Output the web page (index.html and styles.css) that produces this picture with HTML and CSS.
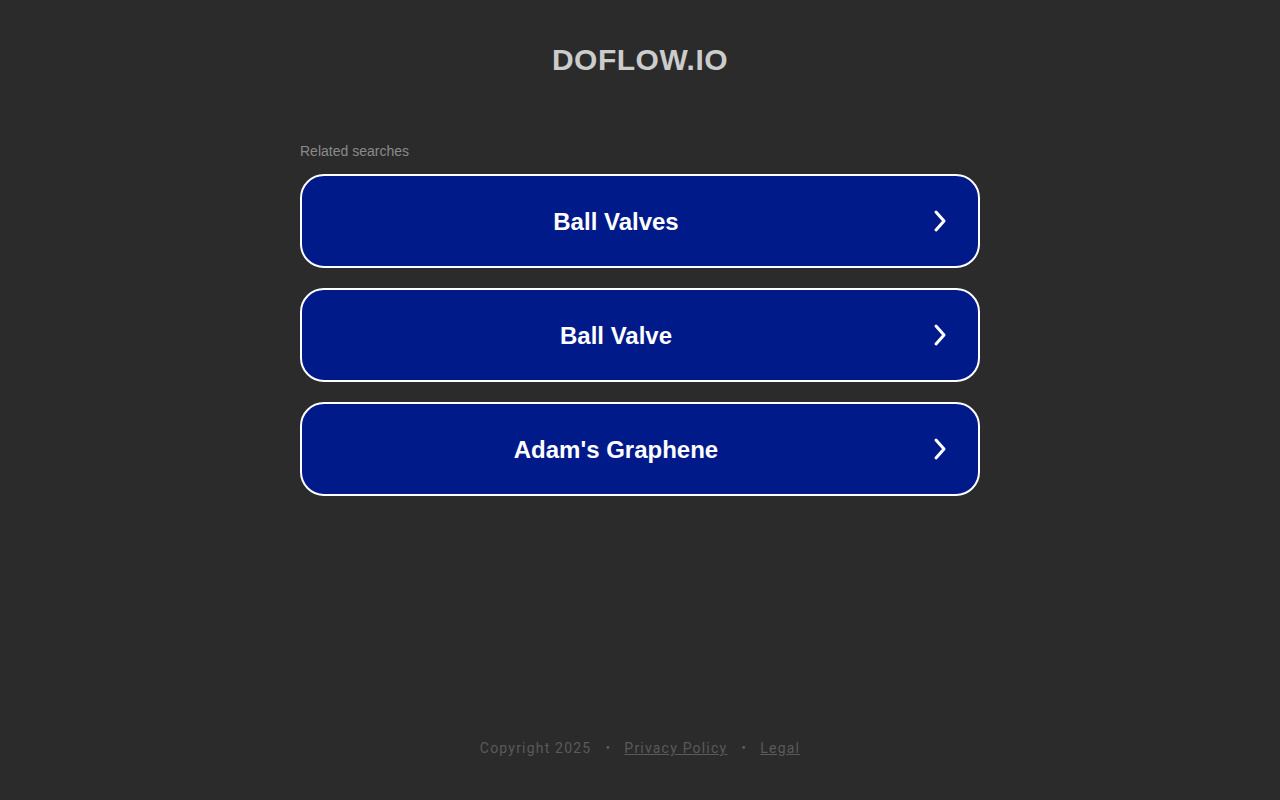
FILE: index.html
```html
<!DOCTYPE html>
<html>
<head>
<meta charset="utf-8">
<link rel="stylesheet" href="styles.css">
</head>
<body>
<div class="page">
  <header class="header"><h1 class="title">DOFLOW.IO</h1></header>
  <main class="main">
    <div class="label">Related searches</div>
    <div class="list">
      <a class="card" href="#"><span class="card-text">Ball Valves</span><span class="card-icon"><svg width="16" height="24" viewBox="0 0 16 24"><path d="M4 3 L12 12 L4 21" fill="none" stroke="#fff" stroke-width="3" stroke-linecap="round" stroke-linejoin="round"/></svg></span></a>
      <a class="card" href="#"><span class="card-text">Ball Valve</span><span class="card-icon"><svg width="16" height="24" viewBox="0 0 16 24"><path d="M4 3 L12 12 L4 21" fill="none" stroke="#fff" stroke-width="3" stroke-linecap="round" stroke-linejoin="round"/></svg></span></a>
      <a class="card" href="#"><span class="card-text">Adam's Graphene</span><span class="card-icon"><svg width="16" height="24" viewBox="0 0 16 24"><path d="M4 3 L12 12 L4 21" fill="none" stroke="#fff" stroke-width="3" stroke-linecap="round" stroke-linejoin="round"/></svg></span></a>
    </div>
  </main>
  <footer class="footer">
    <span>Copyright 2025</span><span class="dot">•</span><a href="#">Privacy Policy</a><span class="dot">•</span><a href="#">Legal</a>
  </footer>
</div>
</body>
</html>
```

FILE: styles.css
```css
html, body {
  margin: 0;
  padding: 0;
  background: #2b2b2b;
  height: 100%;
}
.page {
  height: 800px;
  display: flex;
  flex-direction: column;
  align-items: center;
  font-family: "Liberation Sans", Arial, sans-serif;
}
.header {
  padding-top: 42px;
  height: 100px;
  box-sizing: border-box;
}
.title {
  margin: 0;
  font-size: 30px;
  line-height: 36px;
  font-weight: bold;
  color: #cccccc;
  letter-spacing: 0.5px;
}
.main {
  width: 680px;
  padding-top: 42px;
}
.label {
  font-size: 14px;
  line-height: 18px;
  color: #8a8a8a;
  margin-bottom: 14px;
}
.list {
  display: flex;
  flex-direction: column;
  gap: 20px;
}
.card {
  display: flex;
  align-items: center;
  height: 94px;
  box-sizing: border-box;
  border: 2px solid #ffffff;
  border-radius: 24px;
  background: #011a8a;
  text-decoration: none;
  color: #ffffff;
}
.card-text {
  flex: 1;
  text-align: center;
  font-size: 24px;
  font-weight: bold;
  padding-top: 2px;
}
.card-icon {
  width: 48px;
  display: flex;
  align-items: center;
  justify-content: flex-start;
  box-sizing: border-box;
  padding-left: 2px;
}
.card-icon svg { display: block; }
.footer {
  margin-top: auto;
  margin-bottom: 44px;
  font-family: Roboto, "Open Sans", sans-serif;
  font-size: 14px;
  letter-spacing: 1.2px;
  color: #5a5a5a;
  display: flex;
}
.footer a { color: #5a5a5a; text-decoration: underline; }
.dot { margin: 0 13px 0 14px; }
```
